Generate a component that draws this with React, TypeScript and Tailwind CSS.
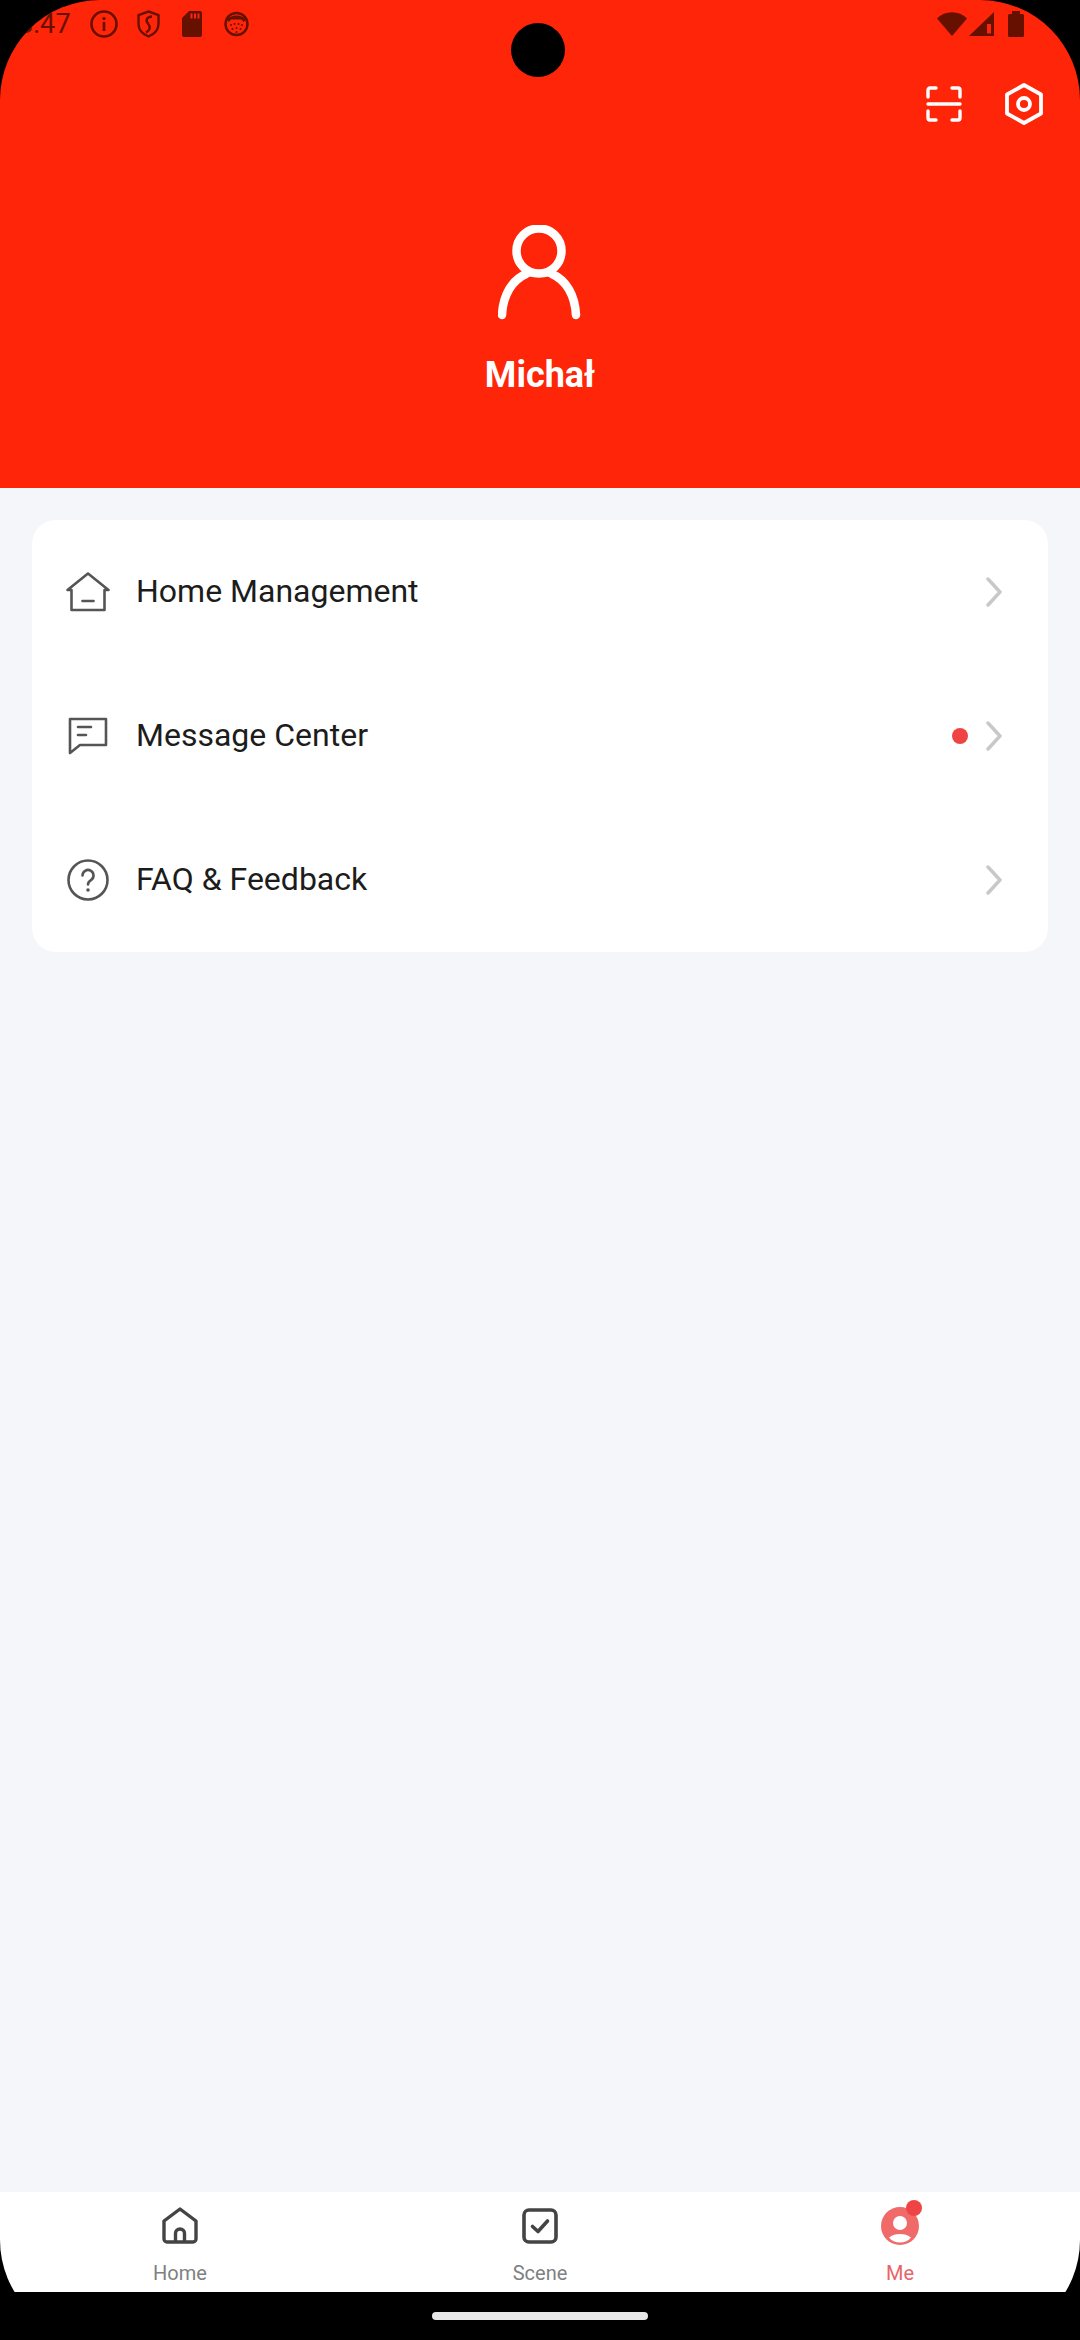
const RED_DARK = "#661000"

const MENU_ITEMS = [
  { id: "home", label: "Home Management", icon: <HomeOutline />, dot: false },
  { id: "message", label: "Message Center", icon: <MessageOutline />, dot: true },
  { id: "faq", label: "FAQ & Feedback", icon: <QuestionOutline />, dot: false },
]

function StatusBar() {
  return (
    <div className="flex h-[48px] items-center pl-[18px] pr-[56px] text-[#661000]">
      <span className="w-[54px] text-[27px] leading-none font-normal tracking-[0.2px]">8:47</span>
      <svg className="ml-[18px]" width="28" height="28" viewBox="0 0 28 28" fill="none" stroke={RED_DARK}>
        <circle cx="14" cy="14" r="12.5" strokeWidth="2.6" />
        <rect x="12.7" y="12" width="2.6" height="9" fill={RED_DARK} stroke="none" />
        <circle cx="14" cy="8.6" r="1.7" fill={RED_DARK} stroke="none" />
      </svg>
      <svg className="ml-[19px]" width="23" height="28" viewBox="0 0 23 28" fill="none" stroke={RED_DARK} strokeWidth="2.4">
        <path d="M11.5 1.5 21.5 5v9c0 6-4 10-10 12.5C5.500 24 1.500 20 1.500 14V5z" />
        <path d="M15 6.500C10 7 8 10 11 13.500s2 7-2 9" />
      </svg>
      <svg className="ml-[22px]" width="20" height="26" viewBox="0 0 20 26">
        <path
          fill={RED_DARK}
          fillRule="evenodd"
          d="M7 0h11a2 2 0 0 1 2 2v22a2 2 0 0 1-2 2H2a2 2 0 0 1-2-2V7zM8.500 2.500v5h2v-5zM12 2.500v5h2v-5zM15.500 2.500v5h2v-5z"
        />
      </svg>
      <svg className="ml-[22px]" width="25" height="26" viewBox="0 0 25 26" fill="none">
        <circle cx="12.500" cy="13" r="11" stroke={RED_DARK} strokeWidth="2.4" />
        <path d="M3 9c3-6 16-6 19 0l-2.500 2-2-2.500h-10.500l-2 2.500z" fill={RED_DARK} />
        <g fill={RED_DARK}>
          <circle cx="7" cy="14" r="1" />
          <circle cx="10.500" cy="13" r="1" />
          <circle cx="14.500" cy="13" r="1" />
          <circle cx="18" cy="14" r="1" />
          <circle cx="8.500" cy="18" r="1" />
          <circle cx="12.500" cy="17" r="1" />
          <circle cx="16.500" cy="18" r="1" />
          <circle cx="12.500" cy="21" r="1" />
        </g>
      </svg>
      <div className="flex-1" />
      <svg width="30" height="24" viewBox="0 0 30 24">
        <path d="M0 6.500C8-2 22-2 30 6.500L15 24z" fill={RED_DARK} />
      </svg>
      <svg className="ml-[2px]" width="25" height="24" viewBox="0 0 25 24">
        <path d="M0 24 25 0v24z" fill={RED_DARK} />
        <rect x="18" y="12" width="4" height="9.500" fill="#ff2508" />
      </svg>
      <svg className="ml-[14px]" width="16" height="26" viewBox="0 0 16 26">
        <path d="M4 0h8v3h2.500a1.500 1.500 0 0 1 1.500 1.500v20a1.500 1.500 0 0 1-1.500 1.500h-13A1.500 1.500 0 0 1 0 24.500v-20A1.500 1.500 0 0 1 1.500 3H4z" fill={RED_DARK} />
      </svg>
    </div>
  )
}

function ScanIcon() {
  return (
    <svg width="36" height="36" viewBox="0 0 36 36" fill="none" stroke="#fff" strokeWidth="3.400" strokeLinecap="round" strokeLinejoin="round">
      <path d="M2 11V4a2 2 0 0 1 2-2h6" />
      <path d="M26 2h6a2 2 0 0 1 2 2v7" />
      <path d="M2 25v7a2 2 0 0 0 2 2h6" />
      <path d="M26 34h6a2 2 0 0 0 2-2v-7" />
      <path d="M2 18h32" />
    </svg>
  )
}

function HexIcon() {
  return (
    <svg width="38" height="42" viewBox="0 0 38 42" fill="none" stroke="#fff" strokeWidth="3.800" strokeLinejoin="round">
      <path d="M19 2 36 11.500v19L19 40 2 30.500v-19z" />
      <circle cx="19" cy="21" r="6" />
    </svg>
  )
}

function Avatar() {
  return (
    <svg width="84" height="96" viewBox="0 0 84 96" fill="none" stroke="#fff" strokeWidth="8.500" strokeLinecap="round">
      <circle cx="41" cy="26" r="22.500" />
      <path d="M4 90C5 70 14 55 28 49M78 90C77 70 68 55 54 49" />
      <path d="M28 49c8-1 18-1 26 0" strokeWidth="6" />
    </svg>
  )
}

function HomeOutline() {
  return (
    <svg width="44" height="40" viewBox="0 0 44 40" fill="none" stroke="#555" strokeWidth="2.600" strokeLinejoin="round" strokeLinecap="round">
      <path d="M1.500 18 22 1.500 42.500 18h-4v20h-33V18z" />
      <path d="M16.500 29h11" />
    </svg>
  )
}

function MessageOutline() {
  return (
    <svg width="40" height="38" viewBox="0 0 40 38" fill="none" stroke="#555" strokeWidth="2.600" strokeLinejoin="round" strokeLinecap="round">
      <path d="M2 2h36v26H12l-10 8z" />
      <path d="M10 10h13M10 18h8" />
    </svg>
  )
}

function QuestionOutline() {
  return (
    <svg width="42" height="42" viewBox="0 0 42 42" fill="none" stroke="#555" strokeWidth="2.600" strokeLinecap="round">
      <circle cx="21" cy="21" r="19.500" />
      <path d="M15.500 16.500a5.500 5.500 0 1 1 8.500 4.600c-2 1.300-3 2.400-3 4.400" />
      <circle cx="21" cy="31" r="1.800" fill="#555" stroke="none" />
    </svg>
  )
}

function Chevron() {
  return (
    <svg width="16" height="30" viewBox="0 0 16 30" fill="none" stroke="#c8c8c8" strokeWidth="3.400" strokeLinecap="round" strokeLinejoin="round">
      <path d="M2 2 14 15 2 28" />
    </svg>
  )
}

function TabHome() {
  return (
    <svg width="36" height="38" viewBox="0 0 36 38" fill="none" stroke="#444" strokeWidth="3.400" strokeLinejoin="round">
      <path d="M18 2 34 14v18a3 3 0 0 1-3 3H5a3 3 0 0 1-3-3V14z" />
      <path d="M13.500 35V26.500a4.500 4.500 0 0 1 9 0V35" />
    </svg>
  )
}

function TabScene() {
  return (
    <svg width="36" height="36" viewBox="0 0 36 36" fill="none" stroke="#444" strokeWidth="3.600" strokeLinejoin="round" strokeLinecap="round">
      <rect x="2" y="2" width="32" height="32" rx="5" />
      <path d="M10.500 18.500 16 23.500 25.500 13" />
    </svg>
  )
}

function TabMe() {
  return (
    <svg width="38" height="38" viewBox="0 0 38 38">
      <circle cx="19" cy="19" r="19" fill="#f06a6a" />
      <circle cx="19" cy="16" r="7" fill="#fff" />
      <path d="M8 30.500C11 28 15 27 19 27s8 1 11 3.500C27.500 34 23.500 35.500 19 35.500S10.500 34 8 30.500z" fill="#fff" />
    </svg>
  )
}

function TabItem({ label, active, children }: { label: string; active?: boolean; children: React.ReactNode }) {
  return (
    <div className="flex flex-col items-center pt-[15px]">
      <div className="relative flex h-[38px] items-center justify-center">
        {children}
        {active && <span className="absolute top-[-7px] right-[-3px] h-4 w-4 rounded-full bg-[#ef4444]" />}
      </div>
      <span className={`mt-[15px] text-[20px] leading-[26px] ${active ? "text-[#e8646a]" : "text-[#808080]"}`}>
        {label}
      </span>
    </div>
  )
}

export default function App() {
  return (
    <div className="relative h-[2340px] w-[1080px] bg-black" style={{ fontFamily: "Roboto, sans-serif" }}>
      <div className="flex h-full flex-col overflow-hidden rounded-[100px]">
        <header className="flex h-[488px] flex-col bg-[#ff2508]">
          <StatusBar />
          <div className="mt-[35px] flex items-center justify-end gap-[43px] pr-[37px]">
            <ScanIcon />
            <HexIcon />
          </div>
          <div className="mt-[100px] flex justify-center">
            <Avatar />
          </div>
          <div className="mt-[33px] text-center text-[36px] leading-[42px] font-bold text-white">Michał</div>
        </header>

        <main className="flex-1 bg-[#f5f6fa] px-8 pt-8">
          <div className="rounded-[24px] bg-white">
            {MENU_ITEMS.map((item) => (
              <div key={item.id} className="flex h-[144px] items-center pr-[46px] pl-[34px]">
                <div className="flex w-[44px] justify-center">{item.icon}</div>
                <span className="mb-[2px] ml-[26px] flex-1 text-[32px] leading-none text-[#1c1c1c]">{item.label}</span>
                {item.dot && <span className="mr-[18px] h-4 w-4 rounded-full bg-[#ef4444]" />}
                <Chevron />
              </div>
            ))}
          </div>
        </main>

        <nav className="grid h-[100px] grid-cols-3 bg-white">
          <TabItem label="Home">
            <TabHome />
          </TabItem>
          <TabItem label="Scene">
            <TabScene />
          </TabItem>
          <TabItem label="Me" active>
            <TabMe />
          </TabItem>
        </nav>

        <div className="flex h-[48px] items-start justify-center bg-black pt-[20px]">
          <span className="h-2 w-[216px] rounded-full bg-[#e8e8e8]" />
        </div>
      </div>

      {/* camera cutout */}
      <span className="absolute top-[23px] left-[511px] h-[54px] w-[54px] rounded-full bg-black" />
    </div>
  )
}
